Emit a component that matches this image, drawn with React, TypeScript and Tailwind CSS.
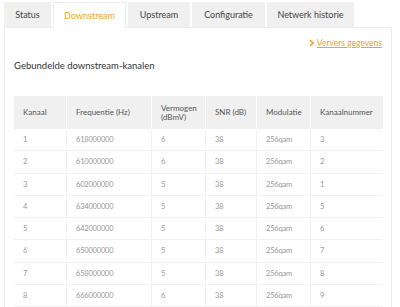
import React from "react";

const rows = [
  ["1", "618000000", "6", "38", "256qam", "3"],
  ["2", "610000000", "6", "38", "256qam", "2"],
  ["3", "602000000", "5", "38", "256qam", "1"],
  ["4", "634000000", "5", "38", "256qam", "5"],
  ["5", "642000000", "5", "38", "256qam", "6"],
  ["6", "650000000", "5", "38", "256qam", "7"],
  ["7", "658000000", "5", "38", "256qam", "8"],
  ["8", "666000000", "6", "38", "256qam", "9"],
];

const cols = "grid grid-cols-[53px_85px_54px_51px_54px_72px]";

export default function App() {
  return (
    <div
      className="w-[400px] h-[307px] overflow-hidden bg-white"
      style={{ fontFamily: "Lato, 'Open Sans', sans-serif" }}
    >
      <div className="flex pl-[4px] pt-[2px] gap-[2px] h-[27px] text-[9px]">
        <div className="w-[47px] h-[25px] bg-[#f0f0f0] flex items-center justify-center text-[#444]">
          Status
        </div>
        <div className="w-[73px] h-[26px] bg-white border border-b-0 border-[#ececec] flex items-center justify-center text-[#f5a030] relative z-10">
          Downstream
        </div>
        <div className="w-[62px] h-[25px] bg-[#f0f0f0] flex items-center justify-center text-[#444]">
          Upstream
        </div>
        <div className="w-[73px] h-[25px] bg-[#f0f0f0] flex items-center justify-center text-[#444]">
          Configuratie
        </div>
        <div className="w-[87px] h-[25px] bg-[#f0f0f0] flex items-center justify-center text-[#444]">
          Netwerk historie
        </div>
      </div>
      <div className="ml-[4px] w-[388px] h-[300px] border border-[#ececec] px-[9px]">
        <div className="flex justify-end items-center h-[28px] pt-[2px] text-[8.5px] text-[#f5a030]">
          <svg width="5" height="8" viewBox="0 0 5 8" className="mr-[3px]">
            <path d="M1 1 L4 4 L1 7" fill="none" stroke="#f5a030" strokeWidth="1.6" />
          </svg>
          <span className="underline">Ververs gegevens</span>
        </div>
        <div className="h-[20px] flex items-center text-[9.5px] text-[#333]">
          Gebundelde downstream-kanalen
        </div>
        <div className="mt-[20px] w-[369px]">
          <div className={`${cols} h-[33px] bg-[#f0f0f0] text-[8px] text-[#555]`}>
            {["Kanaal", "Frequentie (Hz)", "Vermogen (dBmV)", "SNR (dB)", "Modulatie", "Kanaalnummer"].map(
              (h, i) => (
                <div
                  key={i}
                  className={`flex items-center pl-[9px] pr-[8px] leading-[9px] ${i < 5 ? "border-r border-white" : ""}`}
                >
                  {h}
                </div>
              )
            )}
          </div>
          {rows.map((r, ri) => (
            <div
              key={ri}
              className={`${cols} h-[22.25px] border-b border-[#f2f2f2] text-[7.5px] tracking-[-0.2px] text-[#999]`}
            >
              {r.map((c, ci) => (
                <div
                  key={ci}
                  className={`flex items-center pl-[9px] ${ci < 5 ? "border-r border-[#f2f2f2]" : ""}`}
                >
                  {c}
                </div>
              ))}
            </div>
          ))}
          <div className={`${cols} h-[22px]`}>
            {[0, 1, 2, 3, 4, 5].map((ci) => (
              <div key={ci} className={ci < 5 ? "border-r border-[#f2f2f2]" : ""} />
            ))}
          </div>
        </div>
      </div>
    </div>
  );
}
